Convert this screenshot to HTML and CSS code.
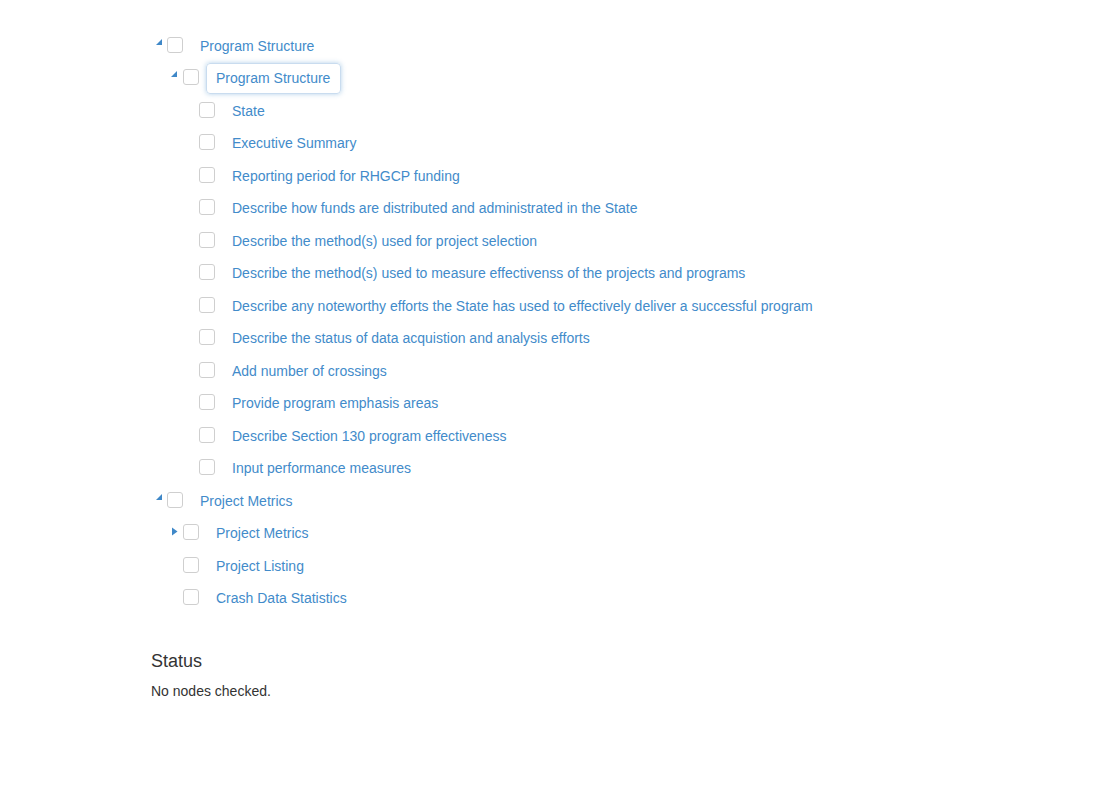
FILE: index.html
```html
<!DOCTYPE html>
<html lang="en">
  <head>
    <meta charset="UTF-8" />
    <meta name="viewport" content="width=device-width, initial-scale=1.0" />
    <title>Tree View</title>
    <link rel="stylesheet" href="styles.css">
  </head>
  <body>
    <div class="page">
      <!-- 树 -->
      <ul class="tree">
        <li>
          <div class="row">
            <span class="toggle">
              <svg width="16" height="16" viewBox="0 0 16 16"><polygon points="11,2 11,8 5,8" /></svg>
            </span>
            <span class="check"></span>
            <span class="label">Program Structure</span>
          </div>
          <ul>
            <li>
              <div class="row">
                <span class="toggle">
                  <svg width="16" height="16" viewBox="0 0 16 16"><polygon points="10,2 10,8 4,8" /></svg>
                </span>
                <span class="check"></span>
                <span class="label focused">Program Structure</span>
              </div>
              <ul>
                <li><div class="row"><span class="toggle"></span><span class="check"></span><span class="label">State</span></div></li>
                <li><div class="row"><span class="toggle"></span><span class="check"></span><span class="label">Executive Summary</span></div></li>
                <li><div class="row"><span class="toggle"></span><span class="check"></span><span class="label">Reporting period for RHGCP funding</span></div></li>
                <li><div class="row"><span class="toggle"></span><span class="check"></span><span class="label">Describe how funds are distributed and administrated in the State</span></div></li>
                <li><div class="row"><span class="toggle"></span><span class="check"></span><span class="label">Describe the method(s) used for project selection</span></div></li>
                <li><div class="row"><span class="toggle"></span><span class="check"></span><span class="label">Describe the method(s) used to measure effectivenss of the projects and programs</span></div></li>
                <li><div class="row"><span class="toggle"></span><span class="check"></span><span class="label">Describe any noteworthy efforts the State has used to effectively deliver a successful program</span></div></li>
                <li><div class="row"><span class="toggle"></span><span class="check"></span><span class="label">Describe the status of data acquistion and analysis efforts</span></div></li>
                <li><div class="row"><span class="toggle"></span><span class="check"></span><span class="label">Add number of crossings</span></div></li>
                <li><div class="row"><span class="toggle"></span><span class="check"></span><span class="label">Provide program emphasis areas</span></div></li>
                <li><div class="row"><span class="toggle"></span><span class="check"></span><span class="label">Describe Section 130 program effectiveness</span></div></li>
                <li><div class="row"><span class="toggle"></span><span class="check"></span><span class="label">Input performance measures</span></div></li>
              </ul>
            </li>
          </ul>
        </li>
        <li>
          <div class="row">
            <span class="toggle">
              <svg width="16" height="16" viewBox="0 0 16 16"><polygon points="11,2 11,8 5,8" /></svg>
            </span>
            <span class="check"></span>
            <span class="label">Project Metrics</span>
          </div>
          <ul>
            <li>
              <div class="row">
                <span class="toggle">
                  <svg width="16" height="16" viewBox="0 0 16 16"><polygon points="5,3.5 10.5,7.5 5,11.5" /></svg>
                </span>
                <span class="check"></span>
                <span class="label">Project Metrics</span>
              </div>
            </li>
            <li><div class="row"><span class="toggle"></span><span class="check"></span><span class="label">Project Listing</span></div></li>
            <li><div class="row"><span class="toggle"></span><span class="check"></span><span class="label">Crash Data Statistics</span></div></li>
          </ul>
        </li>
      </ul>

      <!-- 状态 -->
      <h4 class="status-title">Status</h4>
      <div class="status-text">No nodes checked.</div>
    </div>
  </body>
</html>
```

FILE: styles.css
```css
body {
  margin: 0;
  font-family: "Liberation Sans", Arial, sans-serif;
  font-size: 14px;
  color: #333;
  background: #fff;
}
.page {
  padding: 30px 0 0 151px;
}
.tree,
.tree ul {
  list-style: none;
  margin: 0;
  padding: 0;
}
.tree ul {
  padding-left: 16px;
}
.row {
  display: flex;
  align-items: center;
  height: 32.5px;
}
.toggle {
  width: 16px;
  height: 16px;
  flex: none;
  margin-top: -3px;
}
.toggle svg {
  display: block;
  fill: #3f88c8;
}
.check {
  width: 14px;
  height: 14px;
  flex: none;
  border: 1px solid #cfcfcf;
  border-radius: 3px;
  background: #fff;
  margin-top: -3px;
}
.label {
  margin-left: 7px;
  padding: 6px 10px 6px 9px;
  line-height: 17px;
  border: 1px solid transparent;
  border-radius: 4px;
  color: #428bca;
  white-space: nowrap;
}
.label.focused {
  border-color: #c9dcef;
  box-shadow: 0 0 5px rgba(66, 139, 202, 0.4);
}
.status-title {
  margin: 36px 0 10px;
  font-size: 18px;
  font-weight: normal;
  line-height: 20px;
  color: #333;
}
.status-text {
  line-height: 20px;
}
```
